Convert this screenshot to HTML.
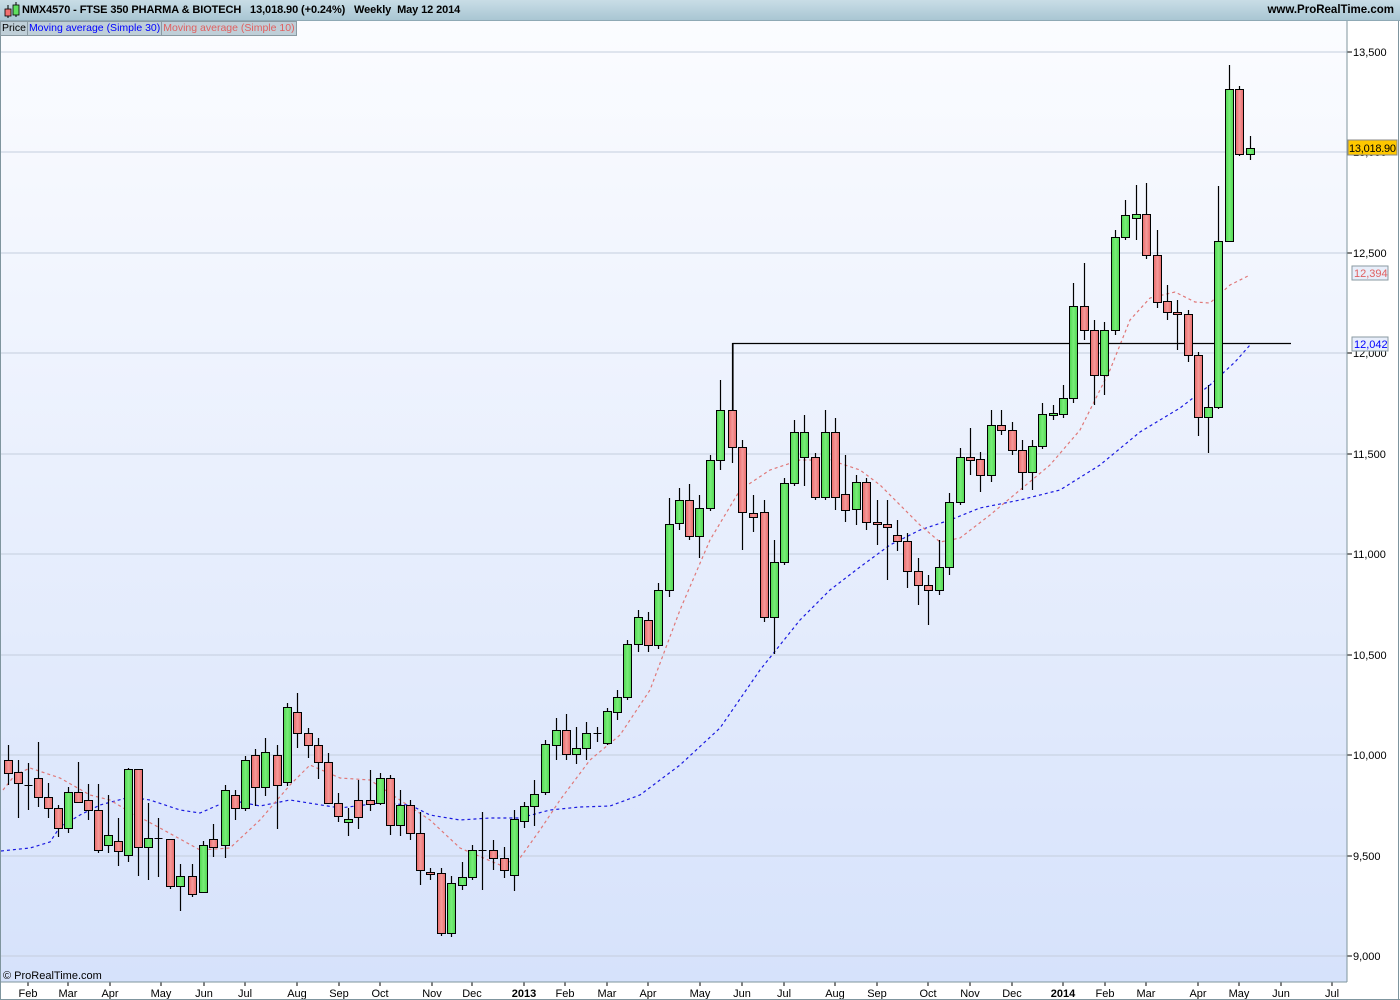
<!DOCTYPE html>
<html><head><meta charset="utf-8"><style>
html,body{margin:0;padding:0;width:1400px;height:1000px;overflow:hidden;background:#fff;font-family:"Liberation Sans",sans-serif;}
#hdr{position:absolute;left:0;top:0;width:1400px;height:20px;background:linear-gradient(#c9dde6,#a9c6d3);border-bottom:1px solid #8fa9b5;}
#hdr .t{position:absolute;left:22px;top:4px;font-size:11px;font-weight:bold;color:#000;white-space:pre;letter-spacing:-0.1px}
#hdr .w{position:absolute;right:6px;top:4px;font-size:11.5px;font-weight:bold;}
#leg{position:absolute;left:0;top:21px;height:13px;font-size:10.5px;line-height:13px;background:#bfcfd8;border:1px solid #8a9aa2;display:flex;z-index:2}
#leg span{padding:0 1px;border-right:1px solid #8a9aa2}
svg{position:absolute;left:0;top:0}
</style></head><body>
<svg id="s" width="1400" height="1000" xmlns="http://www.w3.org/2000/svg" font-family="Liberation Sans, sans-serif">
<defs>
<linearGradient id="bg" x1="0" y1="0" x2="0" y2="1"><stop offset="0" stop-color="#fbfcff"/><stop offset="1" stop-color="#d6e2fb"/></linearGradient>
<linearGradient id="gr" x1="0" y1="0" x2="1" y2="0"><stop offset="0" stop-color="#4fd64f"/><stop offset="0.5" stop-color="#79ee79"/><stop offset="1" stop-color="#4fd64f"/></linearGradient>
<linearGradient id="rd" x1="0" y1="0" x2="1" y2="0"><stop offset="0" stop-color="#e86868"/><stop offset="0.5" stop-color="#f59a9a"/><stop offset="1" stop-color="#e86868"/></linearGradient>
</defs>
<rect x="1" y="21" width="1346" height="961" fill="url(#bg)"/>
<g id="g"></g>
<line x1="1347" y1="21" x2="1347" y2="982" stroke="#7f959e"/>
<line x1="0" y1="982" x2="1347" y2="982" stroke="#7f959e"/>
<line x1="0.5" y1="21" x2="0.5" y2="1000" stroke="#7f959e"/>
<line x1="1398.5" y1="21" x2="1398.5" y2="1000" stroke="#7f959e"/>
<line x1="0" y1="999.5" x2="1400" y2="999.5" stroke="#7f959e"/>
<text x="3" y="979" font-size="11">© ProRealTime.com</text>
</svg>
<div id="hdr"><svg width="22" height="20" style="left:2px;top:0"><line x1="6" y1="5" x2="6" y2="18" stroke="#000"/><rect x="3" y="9" width="6" height="7" fill="#f07070" stroke="#000" stroke-width="0.8"/><line x1="14" y1="2" x2="14" y2="17" stroke="#000"/><rect x="11" y="5" width="6" height="10" fill="#5fe05f" stroke="#000" stroke-width="0.8"/></svg><div class="t">NMX4570 - FTSE 350 PHARMA &amp; BIOTECH   13,018.90 (+0.24%)   Weekly  May 12 2014</div><div class="w">www.ProRealTime.com</div></div>
<div id="leg"><span>Price</span><span style="color:#0000ff">Moving average (Simple 30)</span><span style="color:#e06060;border:none">Moving average (Simple 10)</span></div>
<script>
var g=document.getElementById('g'),h='';
var P=[[13500,52],[13000,152],[12500,253],[12000,353],[11500,454],[11000,554],[10500,655],[10000,755],[9500,856],[9000,956]];
P.forEach(function(p){h+='<line x1="1" y1="'+p[1]+'" x2="1347" y2="'+p[1]+'" stroke="#c4cedd"/>';h+='<line x1="1347" y1="'+p[1]+'" x2="1352" y2="'+p[1]+'" stroke="#000"/>';h+='<text x="1353" y="'+(p[1]+4)+'" font-size="11">'+p[0].toLocaleString('en-US')+'</text>';});
var B=[['Feb',28],['Mar',68],['Apr',110],['May',161],['Jun',204],['Jul',245],['Aug',297],['Sep',339],['Oct',380],['Nov',432],['Dec',472],['2013',524,1],['Feb',565],['Mar',607],['Apr',648],['May',700],['Jun',742],['Jul',784],['Aug',835],['Sep',877],['Oct',928],['Nov',970],['Dec',1012],['2014',1063,1],['Feb',1105],['Mar',1146],['Apr',1198],['May',1239],['Jun',1281],['Jul',1332]];
B.forEach(function(b){h+='<line x1="'+b[1]+'" y1="982" x2="'+b[1]+'" y2="986" stroke="#000"/><text x="'+b[1]+'" y="997" font-size="11" text-anchor="middle"'+(b[2]?' font-weight="bold" font-size="12"':'')+'>'+b[0]+'</text>';});
function pl(pts,c){var d='M'+pts.map(function(p){return p.join(',')}).join(' L');return '<path d="'+d+'" fill="none" stroke="'+c+'" stroke-width="1.2" stroke-dasharray="3,3"/>';}
h+=pl([[1,851],[30,848],[50,842],[60,827],[80,815],[100,805],[130,797],[150,800],[180,810],[200,813],[230,800],[260,806],[290,800],[340,808],[380,803],[410,805],[430,815],[460,820],[490,818],[520,818],[550,810],[580,807],[610,806],[640,795],[680,765],[720,728],[760,670],[800,620],[830,590],[860,567],[890,545],[920,530],[950,520],[980,508],[1020,500],[1060,490],[1100,465],[1140,432],[1180,408],[1210,385],[1235,362],[1250,345]],'#1a1ae0');
h+=pl([[3,790],[15,775],[30,768],[60,778],[90,795],[110,800],[130,812],[160,828],[200,850],[230,848],[260,820],[290,785],[310,765],[340,778],[370,780],[400,800],[430,820],[460,848],[500,865],[520,858],[540,830],[560,800],[590,760],[620,735],[650,690],[680,610],[710,540],[740,490],[770,470],[800,460],[830,460],[860,470],[880,485],[900,505],[920,525],[940,542],[960,538],[990,515],[1020,490],[1050,465],[1080,430],[1110,370],[1130,320],[1150,298],[1175,292],[1195,302],[1210,303],[1230,285],[1250,275]],'#e07878');
h+='<path d="M733,410 V343.5 H1291" fill="none" stroke="#000" stroke-width="1.2"/>';
var C=[[8,'r',760,773,745,785],[18,'r',772,783,760,818],[28,'d',785,785,763,810],[38,'r',778,797,742,807],[48,'r',797,808,783,818],[58,'r',808,828,805,837],[68,'g',792,828,787,833],[78,'r',792,802,762,803],[88,'r',800,810,784,820],[98,'r',810,850,784,853],[108,'g',835,845,795,853],[118,'r',841,851,818,866],[128,'g',769,855,768,862],[138,'r',769,847,769,876],[148,'g',838,847,803,880],[158,'d',838,838,818,877],[170,'r',839,886,839,889],[180,'g',876,886,864,911],[192,'r',876,894,864,897],[203,'g',845,892,841,893],[213,'r',839,847,824,857],[225,'g',790,845,785,858],[235,'r',795,808,790,820],[245,'g',760,808,756,811],[255,'r',755,787,749,806],[265,'g',752,787,738,796],[277,'r',755,785,745,829],[287,'g',707,782,703,786],[297,'r',712,733,693,748],[308,'r',733,745,728,758],[318,'r',745,762,738,779],[328,'r',762,803,753,803],[338,'r',803,816,793,822],[348,'g',819,822,808,836],[358,'r',800,817,780,829],[370,'r',800,804,770,811],[380,'g',778,803,773,805],[390,'r',778,825,775,835],[400,'g',805,825,790,836],[410,'r',805,833,800,840],[420,'r',833,870,812,885],[430,'r',872,874,868,880],[441,'r',873,933,868,936],[451,'g',883,933,876,937],[462,'g',877,885,862,890],[472,'g',850,877,845,880],[482,'d',850,850,812,890],[493,'r',850,858,840,870],[504,'r',858,870,847,878],[514,'g',819,875,810,891],[524,'g',806,821,802,828],[534,'g',794,806,780,826],[545,'g',744,792,740,795],[556,'g',730,745,718,760],[566,'r',730,754,714,760],[576,'g',748,754,727,764],[586,'g',733,748,722,760],[597,'d',733,733,727,742],[607,'g',711,743,708,745],[617,'g',697,712,690,720],[627,'g',644,697,640,700],[638,'g',617,644,610,652],[648,'r',620,645,612,652],[658,'g',590,645,583,649],[669,'g',524,590,498,597],[679,'g',500,523,488,530],[689,'r',500,536,484,540],[699,'g',508,536,495,558],[710,'g',460,508,455,511],[720,'g',410,460,380,470],[732,'r',410,447,343,463],[742,'r',447,512,440,550],[753,'r',513,517,495,532],[764,'r',512,617,500,622],[774,'g',562,617,540,654],[784,'g',483,562,478,565],[794,'g',432,483,420,486],[804,'g',432,457,415,486],[815,'r',457,497,453,500],[825,'g',432,497,410,500],[835,'r',432,497,418,510],[845,'r',494,510,455,522],[856,'g',482,509,475,525],[866,'r',482,522,478,530],[877,'r',522,524,500,545],[887,'r',524,527,500,580],[897,'r',535,541,520,551],[907,'r',541,571,533,588],[918,'r',571,585,558,605],[928,'r',585,590,575,625],[939,'g',567,590,540,595],[949,'g',502,567,493,575],[960,'g',457,502,448,505],[970,'r',457,460,428,475],[980,'r',459,475,452,492],[991,'g',425,475,410,482],[1001,'r',425,430,410,435],[1012,'r',430,450,422,455],[1022,'r',450,472,440,490],[1032,'g',446,472,440,490],[1042,'g',414,446,403,449],[1053,'g',413,415,405,420],[1063,'g',398,414,385,418],[1073,'g',306,398,283,403],[1084,'r',306,330,263,340],[1094,'r',330,375,320,405],[1104,'g',330,375,322,395],[1115,'g',237,330,230,335],[1125,'g',215,237,200,240],[1136,'g',214,218,185,240],[1146,'r',214,255,183,259],[1157,'r',255,302,230,308],[1167,'r',301,312,285,320],[1177,'r',312,314,300,350],[1188,'r',314,355,310,362],[1198,'r',355,417,352,436],[1208,'g',407,417,385,453],[1218,'g',241,407,186,409],[1229,'g',89,241,65,242],[1239,'r',89,154,86,156],[1250,'g',148,154,136,160]];
C.forEach(function(c){var x=c[0];h+='<line x1="'+(x+.5)+'" y1="'+c[4]+'" x2="'+(x+.5)+'" y2="'+c[5]+'" stroke="#000" stroke-width="1.2"/>';
if(c[1]=='d'){h+='<line x1="'+(x-3.5)+'" y1="'+(c[2]+.5)+'" x2="'+(x+4.5)+'" y2="'+(c[2]+.5)+'" stroke="#000"/>';}
else{var hh=Math.max(c[3]-c[2],2);h+='<rect x="'+(x-3.5)+'" y="'+(c[2]+.5)+'" width="8" height="'+hh+'" fill="url(#'+(c[1]=='g'?'gr':'rd')+')" stroke="#000" stroke-width="1"/>';}});
h+='<rect x="1348" y="140" width="49" height="15" fill="#ffc800" stroke="#888"/><text x="1349" y="152" font-size="11" textLength="47">13,018.90</text>';
h+='<rect x="1352" y="266" width="36" height="14" fill="#e8eefa" stroke="#8a9aa2"/><text x="1354" y="277" font-size="11" fill="#e06060">12,394</text>';
h+='<rect x="1352" y="337" width="36" height="14" fill="#e8eefa" stroke="#8a9aa2"/><text x="1354" y="348" font-size="11" fill="#0000ff">12,042</text>';
g.innerHTML=h;
</script>
</body></html>
